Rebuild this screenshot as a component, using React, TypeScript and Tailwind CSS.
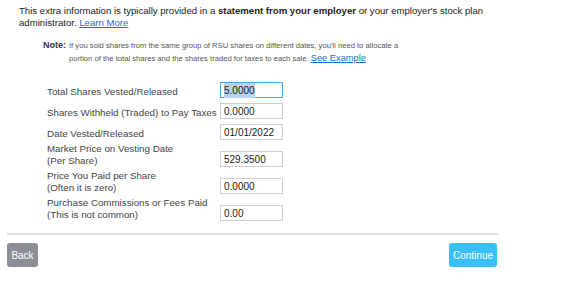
export default function App() {
  const rows: { label: string[]; value: string; focused?: boolean }[] = [
    { label: ["Total Shares Vested/Released"], value: "5.0000", focused: true },
    { label: ["Shares Withheld (Traded) to Pay Taxes"], value: "0.0000" },
    { label: ["Date Vested/Released"], value: "01/01/2022" },
    { label: ["Market Price on Vesting Date", "(Per Share)"], value: "529.3500" },
    { label: ["Price You Paid per Share", "(Often it is zero)"], value: "0.0000" },
    { label: ["Purchase Commissions or Fees Paid", "(This is not common)"], value: "0.00" },
  ];

  return (
    <main className="min-h-screen w-[574px] bg-white font-['Liberation_Sans',Arial,sans-serif]">
      <div className="ml-[7px] w-[491px]">
        {/* Intro */}
        <p className="pl-[12px] pt-[5px] text-[9.6px] leading-[12px] text-[#222]">
          This extra information is typically provided in a <b>statement from your employer</b> or your
          employer's stock plan administrator.{" "}
          <a className="text-[#1a6fcf] underline">Learn More</a>
        </p>

        {/* Note */}
        <div className="mt-[10px] flex pl-[36px]">
          <span className="w-[26px] shrink-0 text-[9px] font-bold leading-[13px] text-[#333]">Note:</span>
          <p className="w-[340px] text-[7.65px] leading-[13px] text-[#555]">
            If you sold shares from the same group of RSU shares on different dates, you'll need to allocate a
            portion of the total shares and the shares traded for taxes to each sale.{" "}
            <a className="text-[9.3px] text-[#1a6fcf] underline">See Example</a>
          </p>
        </div>

        {/* Form */}
        <div className="mt-[12px] flex flex-col pl-[40px]">
          {rows.map((r) => (
            <div
              key={r.value + r.label[0]}
              className={`flex items-end ${r.label.length > 1 ? "h-[27px]" : "h-[21px]"}`}
            >
              <div className="w-[173px] text-[9.75px] leading-[12px] text-[#444]">
                {r.label.map((l) => (
                  <div key={l}>{l}</div>
                ))}
              </div>
              <div
                className={`flex h-[16px] w-[63px] items-center border px-[3px] text-[10px] text-[#222] ${
                  r.focused ? "border-[#4aa8e8]" : "border-[#cfcfcf]"
                }`}
              >
                <span className={r.focused ? "bg-[#b3d4f5]" : ""}>{r.value}</span>
              </div>
            </div>
          ))}
        </div>

        {/* Footer */}
        <div className="mt-[12px] h-[2px] bg-[#dedede]" />
        <div className="mt-[8px] flex justify-between pr-[1px]">
          <button className="h-[24px] w-[31px] rounded-[3px] bg-[#8b8e95] text-[10px] text-white">Back</button>
          <button className="h-[24px] w-[48px] rounded-[3px] bg-[#36c0f7] text-[10px] text-white">Continue</button>
        </div>
      </div>
    </main>
  );
}
